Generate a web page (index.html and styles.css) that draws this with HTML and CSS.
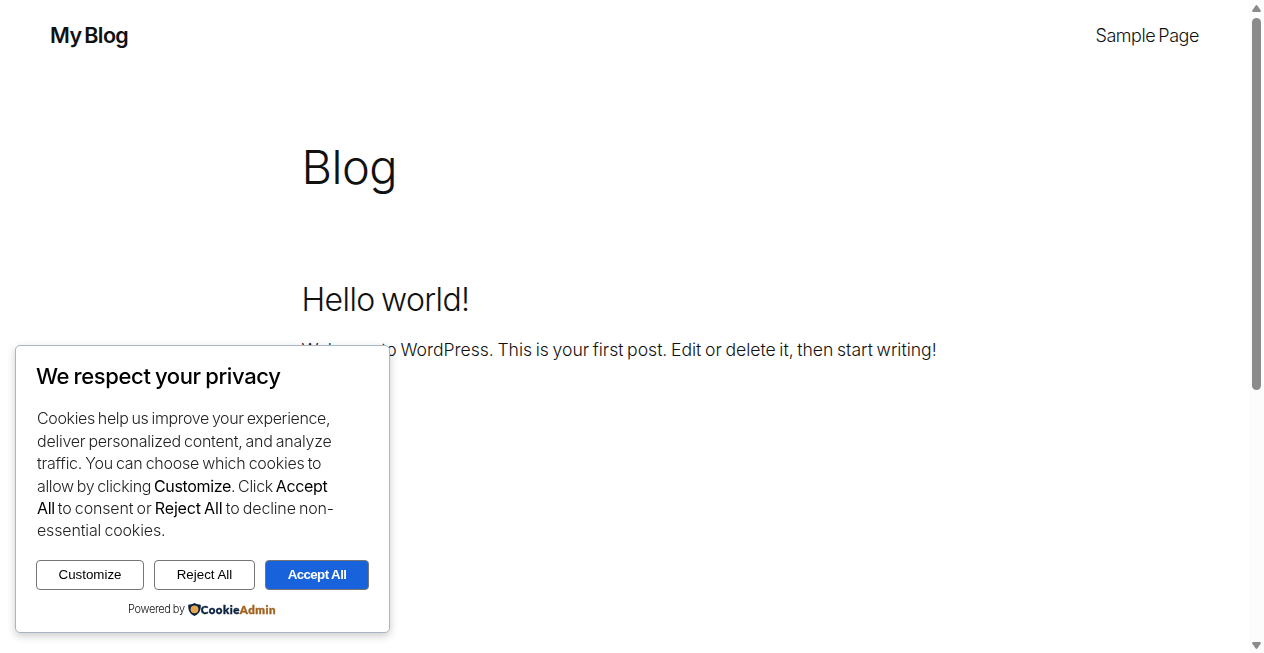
FILE: index.html
```html
<!DOCTYPE html>
<html lang="en">
<head>
  <meta charset="UTF-8">
  <meta name="viewport" content="width=device-width, initial-scale=1.0">
  <title>My Blog</title>
  <link rel="stylesheet" href="styles.css">
</head>
<body>
  <div class="page">
    <header class="site-header">
      <a class="site-title" href="#">My Blog</a>
      <nav>
        <a class="nav-link" href="#">Sample Page</a>
      </nav>
    </header>
    <main class="content">
      <h1>Blog</h1>
      <article>
        <h2>Hello world!</h2>
        <p class="post-text">Welcome to WordPress. This is your first post. Edit or delete it, then start writing!</p>
      </article>
    </main>
  </div>

  <div class="scrollbar">
    <svg width="9" height="7" viewBox="0 0 9 7"><path d="M4.500 0 Q5 0 5.500 0.700 L8.800 5.500 Q9 7 8 7 H1 Q0 7 0.200 5.500 L3.500 0.700 Q4 0 4.500 0 Z" fill="#8b8b8b"/></svg>
    <div class="scrollbar-thumb"></div>
    <svg class="scrollbar-down" width="9" height="7" viewBox="0 0 9 7"><path d="M4.500 7 Q4 7 3.500 6.300 L0.200 1.500 Q0 0 1 0 H8 Q9 0 8.800 1.500 L5.500 6.300 Q5 7 4.500 7 Z" fill="#8b8b8b"/></svg>
  </div>

  <!-- Cookie consent box -->
  <div class="consent">
    <h3>We respect your privacy</h3>
    <p class="consent-text">Cookies help us improve your experience, <span class="loose">deliver personalized content, and analyze traffic. You can choose which cookies to</span> allow by clicking <strong>Customize</strong>. Click <strong>Accept All</strong> <span class="looser">to consent or <strong>Reject All</strong> to decline non-essential cookies.</span></p>
    <div class="consent-buttons">
      <button class="btn btn-customize">Customize</button>
      <button class="btn btn-reject">Reject All</button>
      <button class="btn btn-accept">Accept All</button>
    </div>
    <div class="powered">
      <span class="powered-text">Powered by</span>
      <svg width="13" height="13" viewBox="0 0 13 13">
        <path d="M6.500 0 C8.500 1.300 10.500 1.700 12.700 1.700 C13.300 7.500 10.800 11.500 6.500 13 C2.200 11.500 -0.300 7.500 0.300 1.700 C2.500 1.700 4.500 1.300 6.500 0 Z" fill="#0b2340"/>
        <circle cx="6.500" cy="6.300" r="3.900" fill="#eaa94f"/>
        <circle cx="5.200" cy="5.200" r="0.500" fill="#c98238"/>
        <circle cx="7.800" cy="6.400" r="0.500" fill="#c98238"/>
        <circle cx="5.800" cy="8" r="0.400" fill="#c98238"/>
      </svg>
      <span class="brand">Cookie<span class="brand-admin">Admin</span></span>
    </div>
  </div>
</body>
</html>
```
FILE: styles.css
```css
body {
  margin: 0;
  height: 100vh;
  overflow: hidden;
  font-family: Inter, "Open Sans", sans-serif;
  font-weight: 300;
  color: #111;
  background: #fff;
}
h1, h2, h3, p {
  margin: 0;
}
a {
  color: inherit;
  text-decoration: none;
}
.page {
  margin-right: 15px;
}
.site-header {
  display: flex;
  justify-content: space-between;
  align-items: center;
  height: 70px;
  padding: 0 50px;
}
.site-title {
  font-size: 21.5px;
  font-weight: 600;
  letter-spacing: -0.6px;
  word-spacing: -2px;
}
.nav-link {
  font-size: 18px;
  letter-spacing: -0.45px;
  word-spacing: -1.5px;
}
.content {
  width: 646px;
  margin: 0 auto;
  padding-top: 64px;
}
h1 {
  font-size: 47px;
  font-weight: 300;
  line-height: 66px;
  letter-spacing: -0.5px;
}
h2 {
  margin-top: 78px;
  font-size: 32px;
  font-weight: 300;
  line-height: 44px;
  letter-spacing: -0.6px;
  word-spacing: -2px;
}
.post-text {
  margin-top: 14px;
  font-size: 17.6px;
  line-height: 28px;
  letter-spacing: -0.03px;
  word-spacing: -1.2px;
  white-space: nowrap;
}
.scrollbar {
  position: fixed;
  top: 0;
  right: 0;
  bottom: 0;
  display: flex;
  flex-direction: column;
  align-items: center;
  box-sizing: border-box;
  width: 15px;
  padding: 5px 0 4px;
  background: #fcfcfc;
}
.scrollbar-thumb {
  width: 9px;
  height: 372px;
  margin-top: 6px;
  border-radius: 5px;
  background: #8b8b8b;
}
.scrollbar-down {
  margin-top: auto;
}
.consent {
  position: fixed;
  left: 15px;
  bottom: 20px;
  box-sizing: border-box;
  width: 375px;
  height: 288px;
  padding: 15px 20px;
  border: 1px solid #a8b5c5;
  border-radius: 5px;
  background: #fff;
  box-shadow: 0 3px 9px rgba(0, 0, 0, 0.2);
}
h3 {
  font-size: 22px;
  font-weight: 500;
  line-height: 31px;
  letter-spacing: -0.38px;
  word-spacing: -1px;
  color: #000;
}
.consent-text {
  width: 310px;
  margin: 15.4px 0 18.6px 1px;
  font-size: 16px;
  line-height: 22.4px;
  letter-spacing: -0.36px;
  word-spacing: -1.1px;
  color: #222;
}
.consent-text strong {
  font-weight: 400;
  color: #000;
}
.loose {
  letter-spacing: -0.25px;
}
.looser {
  letter-spacing: -0.15px;
}
.consent-buttons {
  display: flex;
  gap: 10px;
}
.btn {
  height: 30px;
  padding: 0 0 1px;
  border: 1px solid #767676;
  border-radius: 4px;
  font: 13.33px "Liberation Sans", Arial, sans-serif;
  color: #000;
  background: #fff;
}
.btn-customize {
  width: 108px;
}
.btn-reject {
  width: 101px;
}
.btn-accept {
  width: 104px;
  font-weight: bold;
  letter-spacing: -0.6px;
  color: #fff;
  background: #1863dc;
}
.powered {
  display: flex;
  align-items: center;
  height: 16px;
  margin: 11px 0 0 92px;
  font-size: 11px;
  white-space: nowrap;
}
.powered-text {
  margin-right: 3px;
  letter-spacing: -0.35px;
  word-spacing: -0.5px;
}
.brand {
  font-family: Lato, sans-serif;
  font-size: 11.5px;
  font-weight: 900;
  letter-spacing: 0.5px;
  -webkit-text-stroke: 0.4px currentColor;
  color: #0b2340;
}
.brand-admin {
  color: #a3621f;
}
```
